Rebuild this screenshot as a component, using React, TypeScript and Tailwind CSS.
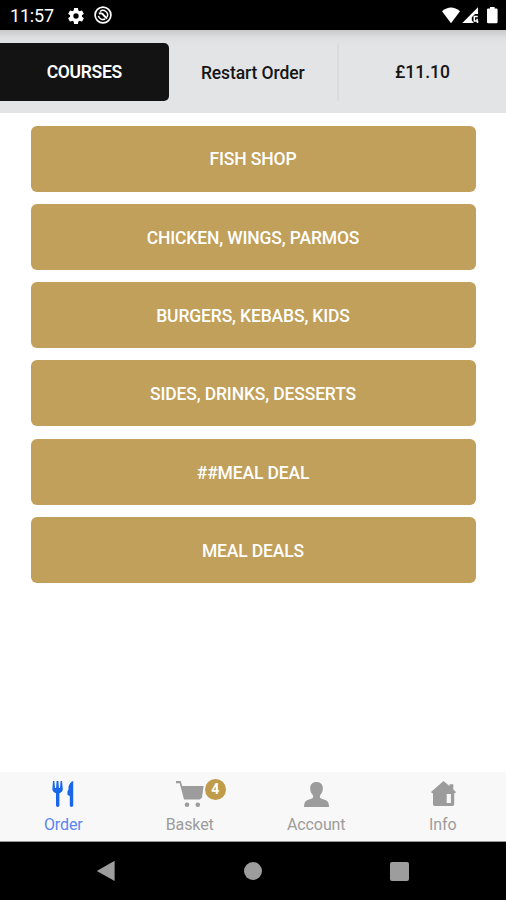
const COURSES = [
  "FISH SHOP",
  "CHICKEN, WINGS, PARMOS",
  "BURGERS, KEBABS, KIDS",
  "SIDES, DRINKS, DESSERTS",
  "##MEAL DEAL",
  "MEAL DEALS",
];

const CutleryIcon = () => (
  <svg width="26" height="28" viewBox="0 0 26 28" fill="currentColor">
    <path d="M3 1 H4.4 L5 8 H6.1 L6.6 1 H8.4 L8.9 8 H10 L10.6 1 H12 L12.8 9 Q12.8 12 9.4 13.2 V25.6 Q9.4 27 7.7 27 Q6 27 6 25.6 V13.2 Q2.4 12 2.4 9 Z" />
    <path d="M23.2 1 V25.6 Q23.2 27 21.5 27 Q19.8 27 19.8 25.6 V16 L17.6 15 Q17.1 11.8 17.8 10.4 L18.5 9.6 V6.8 Q19.7 2.2 23.2 1 Z" />
  </svg>
);

const CartIcon = () => (
  <svg width="30" height="28" viewBox="0 0 30 28" fill="currentColor">
    <path d="M1 1 H5.7 L7.3 6 H28.6 L27 17.5 L24.8 19.5 H9 L4.7 3.2 H1 Z" />
    <circle cx="12" cy="24.8" r="2.3" />
    <circle cx="22.8" cy="24.8" r="2.3" />
  </svg>
);

const PersonIcon = () => (
  <svg width="26" height="28" viewBox="0 0 26 28" fill="currentColor">
    <path d="M13.5 2 C17.5 2 19.8 4.6 19.8 8 C19.8 10.5 19.5 12.5 17.6 14.5 C16.5 16 16.4 17.8 18 18.6 L23 20.2 Q26 21.5 26 27 H1 Q1 21.5 4 20.2 L9 18.6 C10.6 17.8 10.5 16 9.4 14.5 C7.5 12.5 7.2 10.5 7.2 8 C7.2 4.6 9.5 2 13.5 2 Z" />
  </svg>
);

const HouseIcon = () => (
  <svg width="26" height="28" viewBox="0 0 26 28" fill="currentColor">
    <path
      fillRule="evenodd"
      d="M13.5 1 L19.5 6 V4.2 H23.3 V9.5 L26 12 L25 13.2 H24.2 V24.3 Q24.2 26 22.5 26 H4.7 Q3 26 3 24.3 V13.2 H2 L1 12 Z M16.7 14 V23 H20.9 V14 Z"
    />
  </svg>
);

const TABS = [
  { label: "Order", icon: <CutleryIcon />, active: true },
  { label: "Basket", icon: <CartIcon />, badge: 4 },
  { label: "Account", icon: <PersonIcon /> },
  { label: "Info", icon: <HouseIcon /> },
];

const StatusBar = () => (
  <div className="flex h-[30px] shrink-0 items-center bg-black pl-[10px] pr-[7px] text-white">
    <span className="w-[56px] pt-[2px] text-[18px] leading-5 tracking-[-0.2px]">11:57</span>
    <svg className="mt-px" width="20" height="20" viewBox="0 0 24 24" fill="currentColor">
      <path d="M19.14 12.94c.04-.3.06-.61.06-.94s-.02-.64-.07-.94l2.03-1.58a.49.49 0 0 0 .12-.61l-1.92-3.32a.49.49 0 0 0-.59-.22l-2.39.96a7 7 0 0 0-1.62-.94l-.36-2.54A.48.48 0 0 0 13.92 2.4h-3.84a.48.48 0 0 0-.47.41l-.36 2.54c-.59.24-1.13.57-1.62.94l-2.39-.96a.49.49 0 0 0-.59.22L2.74 8.87a.48.48 0 0 0 .12.61l2.03 1.58c-.05.3-.09.63-.09.94s.02.64.07.94l-2.03 1.58a.49.49 0 0 0-.12.61l1.92 3.32c.12.22.37.29.59.22l2.39-.96c.5.38 1.03.7 1.62.94l.36 2.54c.05.24.24.41.48.41h3.84c.24 0 .44-.17.47-.41l.36-2.54a7 7 0 0 0 1.62-.94l2.39.96c.22.08.47 0 .59-.22l1.92-3.32a.48.48 0 0 0-.12-.61zM12 15.2a3.2 3.2 0 1 1 0-6.4 3.2 3.2 0 0 1 0 6.4z" />
    </svg>
    <svg className="ml-[8px]" width="18" height="18" viewBox="0 0 18 18" fill="none" stroke="currentColor">
      <circle cx="9" cy="9" r="7.9" strokeWidth="1.7" />
      <path d="M6 5.5 A4.6 4.6 0 0 1 13 11.2 M11.2 13 A4.6 4.6 0 0 1 4.5 9.8" strokeWidth="1.5" />
      <path d="M4.8 7.4 Q8.6 6.6 9.6 9.2 L13 12.6" strokeWidth="2" />
    </svg>
    <svg className="ml-auto" width="20" height="18" viewBox="0 0 20 18" fill="currentColor">
      <path d="M11 17.2 L2 5.3 Q11 -2.2 20 5.3 Z" />
    </svg>
    <svg className="ml-px" width="18" height="18" viewBox="0 0 18 18" fill="currentColor">
      <path d="M1.3 17 L17 1.2 V8 H14 L10.8 11.3 V14.2 L12.8 17 Z" />
      <path d="M16.8 10.5 H13.3 V15 H16.1 V12.8 M16.5 14.8 V17" fill="none" stroke="currentColor" strokeWidth="1.5" />
    </svg>
    <svg className="ml-[7px]" width="13" height="18" viewBox="0 0 13 18" fill="currentColor">
      <path d="M4 1 H8.6 V2.5 H10.4 Q11.6 2.5 11.6 3.7 V16 Q11.6 17.2 10.4 17.2 H2.2 Q1 17.2 1 16 V3.7 Q1 2.5 2.2 2.5 H4 Z" />
    </svg>
  </div>
);

const OrderBar = () => (
  <div className="flex h-[83px] shrink-0 bg-[#e3e4e6] bg-linear-to-b from-[#c9cacc] via-[#dfe0e2] via-10% to-[#e3e4e6] to-20% pt-[13px] text-[17.5px] text-[#151515]">
    <button className="h-[58px] w-[168.5px] rounded-r-[5px] bg-[#131313] pt-px font-semibold tracking-[-0.3px] text-white">
      COURSES
    </button>
    <button className="h-[58px] w-[170.5px] border-r-2 border-[#dbdcde] pt-[2px] font-medium tracking-[-0.1px]">
      Restart Order
    </button>
    <button className="h-[58px] flex-1 pt-px font-medium">£11.10</button>
  </div>
);

const TabBar = () => (
  <nav className="grid h-[70px] shrink-0 grid-cols-4 border-b border-[#9a9a9a] bg-[#f8f8f8]">
    {TABS.map((tab) => (
      <button
        key={tab.label}
        className={`flex flex-col items-center pt-[8px] ${tab.active ? "text-[#1a66ea]" : "text-[#9c9c9c]"}`}
      >
        <span className="relative">
          {tab.icon}
          {tab.badge && (
            <span className="absolute top-[-1px] left-[30px] flex size-[21px] items-center justify-center rounded-full bg-[#bf9b4a] text-[14px] font-bold text-white">
              {tab.badge}
            </span>
          )}
        </span>
        <span className={`mt-[7px] text-[16px] leading-[20px] tracking-[-0.1px] ${tab.active ? "text-[#5b84f4]" : ""}`}>
          {tab.label}
        </span>
      </button>
    ))}
  </nav>
);

const SystemNav = () => (
  <div className="flex h-[58px] shrink-0 items-center justify-between bg-black pr-[97px] pl-[96px] text-[#9d9d9d]">
    <svg width="20" height="22" viewBox="0 0 20 22" fill="currentColor">
      <path d="M18.6 0.8 V21 L0.8 10.9 Z" />
    </svg>
    <span className="size-[18px] rounded-full bg-[#9d9d9d]" />
    <span className="size-[19px] rounded-[2px] bg-[#9d9d9d]" />
  </div>
);

export default function App() {
  return (
    <div className="flex h-[900px] w-[506px] flex-col overflow-hidden bg-white font-[Roboto,sans-serif]">
      <StatusBar />
      <OrderBar />
      <main className="flex flex-1 flex-col gap-[12.3px] px-[30.5px] pt-[12.5px]">
        {COURSES.map((course) => (
          <button
            key={course}
            className="h-[66px] shrink-0 rounded-[6px] bg-[#c0a05a] pt-[2px] text-[17.5px] font-medium tracking-[-0.15px] text-white"
          >
            {course}
          </button>
        ))}
      </main>
      <TabBar />
      <SystemNav />
    </div>
  );
}
